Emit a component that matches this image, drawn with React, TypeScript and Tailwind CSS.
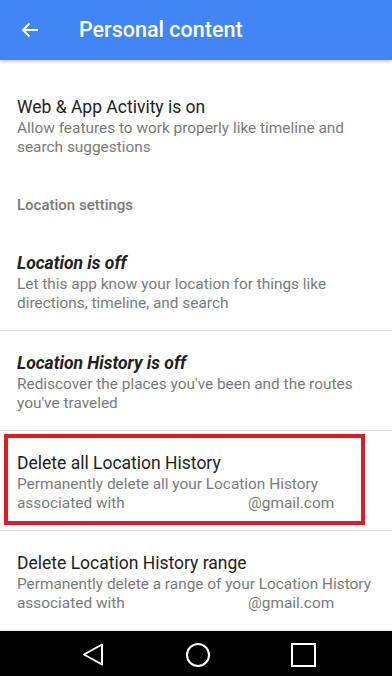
const Item = ({
  title,
  lines,
  italic,
  divider = true,
}: {
  title: string;
  lines: React.ReactNode[];
  italic?: boolean;
  divider?: boolean;
}) => (
  <div className={`px-[17px] pt-[20px] pb-[17px] ${divider ? "border-b border-[#e2e2e2]" : ""}`}>
    <div
      className={`text-[17.5px] leading-[24px] text-[#212121] ${italic ? "italic font-bold" : ""}`}
    >
      {title}
    </div>
    {lines.map((l, i) => (
      <div key={i} className="text-[15.4px] leading-[19px] text-[#7a7a7a]">
        {l}
      </div>
    ))}
  </div>
);

const Gmail = () => (
  <>
    <span className="inline-block w-[231px]">associated with</span>@gmail.com
  </>
);

export default function App() {
  return (
    <div
      className="relative w-[392px] h-[676px] bg-white flex flex-col overflow-hidden"
      style={{ fontFamily: "Roboto, 'Noto Sans', sans-serif" }}
    >
      {/* top bar */}
      <div className="h-[60px] bg-[#4285f4] flex items-center shadow-[0_2px_3px_rgba(0,0,0,0.2)] z-10 shrink-0">
        <svg width="18" height="16" viewBox="0 0 18 16" className="ml-[21px]">
          <path d="M17 8H2M8.5 1.5 2 8l6.5 6.5" fill="none" stroke="#fff" strokeWidth="2" />
        </svg>
        <span className="ml-[40px] text-[21.5px] font-medium text-white">Personal content</span>
      </div>

      <div className="flex-1 flex flex-col">
        <div className="px-[17px] pt-[35px]">
          <div className="text-[17.5px] leading-[24px] text-[#212121]">Web &amp; App Activity is on</div>
          <div className="text-[15.4px] leading-[19px] text-[#7a7a7a]">
            Allow features to work properly like timeline and
          </div>
          <div className="text-[15.4px] leading-[19px] text-[#7a7a7a]">search suggestions</div>
          <div className="mt-[38px] text-[15px] leading-[20px] font-medium text-[#7a7a7a]">
            Location settings
          </div>
        </div>
        <div className="pt-[16px]">
          <Item
            italic
            title="Location is off"
            lines={["Let this app know your location for things like", "directions, timeline, and search"]}
          />
        </div>
        <Item
          italic
          title="Location History is off"
          lines={["Rediscover the places you've been and the routes", "you've traveled"]}
        />
        <Item
          title="Delete all Location History"
          lines={["Permanently delete all your Location History", <Gmail key="g" />]}
        />
        <Item
          title="Delete Location History range"
          lines={["Permanently delete a range of your Location History", <Gmail key="g" />]}
        />
      </div>

      {/* highlight annotation */}
      <div className="absolute left-[4px] top-[434px] w-[361px] h-[91px] border-4 border-[#e01b24]" />

      {/* nav bar */}
      <div className="h-[46px] bg-black shrink-0 relative">
        <svg width="392" height="46" viewBox="0 0 392 46" className="absolute left-0 top-0">
          <path d="M102 13.5 84 23.5l18 10Z" fill="none" stroke="#fff" strokeWidth="2" strokeLinejoin="round" />
          <circle cx="198" cy="24" r="11" fill="none" stroke="#fff" strokeWidth="2" />
          <rect x="292" y="13" width="23" height="22" fill="none" stroke="#fff" strokeWidth="2" />
        </svg>
      </div>
    </div>
  );
}
